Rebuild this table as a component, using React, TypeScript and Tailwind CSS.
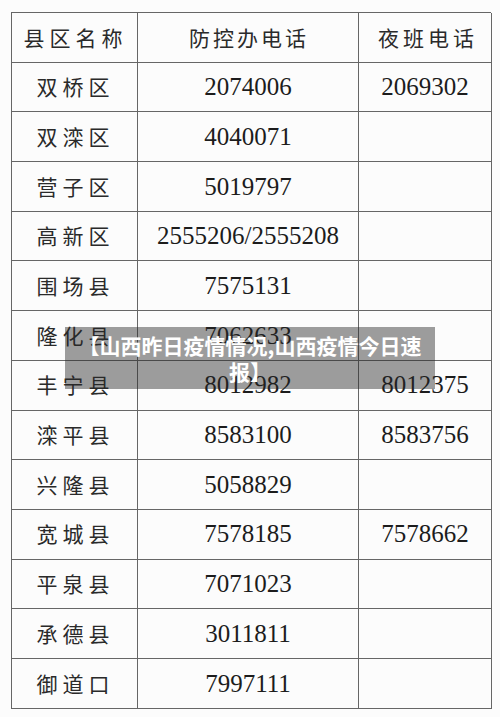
import { Fragment } from "react";

const rows: [string, string, string][] = [
  ["双桥区", "2074006", "2069302"],
  ["双滦区", "4040071", ""],
  ["营子区", "5019797", ""],
  ["高新区", "2555206/2555208", ""],
  ["围场县", "7575131", ""],
  ["隆化县", "7062633", ""],
  ["丰宁县", "8012982", "8012375"],
  ["滦平县", "8583100", "8583756"],
  ["兴隆县", "5058829", ""],
  ["宽城县", "7578185", "7578662"],
  ["平泉县", "7071023", ""],
  ["承德县", "3011811", ""],
  ["御道口", "7997111", ""],
];

const cjk = "font-['Noto_Sans_CJK_SC',sans-serif] font-normal text-[21px] text-[#2a2a2a]";
const num = "font-['Liberation_Serif',serif] text-[25px] text-[#1c1c1c]";

function Cell({ children, className = "" }: { children?: React.ReactNode; className?: string }) {
  return (
    <div className={`flex h-[49.7px] items-center justify-center border-b border-r border-[#666] ${className}`}>
      {children}
    </div>
  );
}

export default function App() {
  return (
    <div className="relative h-[717px] w-[500px] overflow-hidden bg-[#fcfcfc]">
      <div className="pl-[11px] pt-[12px]">
        <div className="grid w-[480px] grid-cols-[126px_221px_133px] border-l border-t border-[#666]">
          <Cell className={`${cjk} tracking-[5px] pl-[2px]`}>县区名称</Cell>
          <Cell className={`${cjk} tracking-[3px] pl-[2px]`}>防控办电话</Cell>
          <Cell className={`${cjk} tracking-[4px] pl-[6px]`}>夜班电话</Cell>
          {rows.map(([name, a, b]) => (
            <Fragment key={name}>
              <Cell className={`${cjk} tracking-[5px] pl-[2px]`}>{name}</Cell>
              <Cell className={num}>{a}</Cell>
              <Cell className={num}>{b}</Cell>
            </Fragment>
          ))}
        </div>
      </div>

      <div className="absolute left-[65px] top-[327px] w-[370px] bg-[rgba(40,40,40,0.45)] px-[8px] py-[5px] text-center font-['Noto_Sans_CJK_SC',sans-serif] text-[21px] font-bold leading-[26px] text-white">
        【山西昨日疫情情况,山西疫情今日速报】
      </div>
    </div>
  );
}
